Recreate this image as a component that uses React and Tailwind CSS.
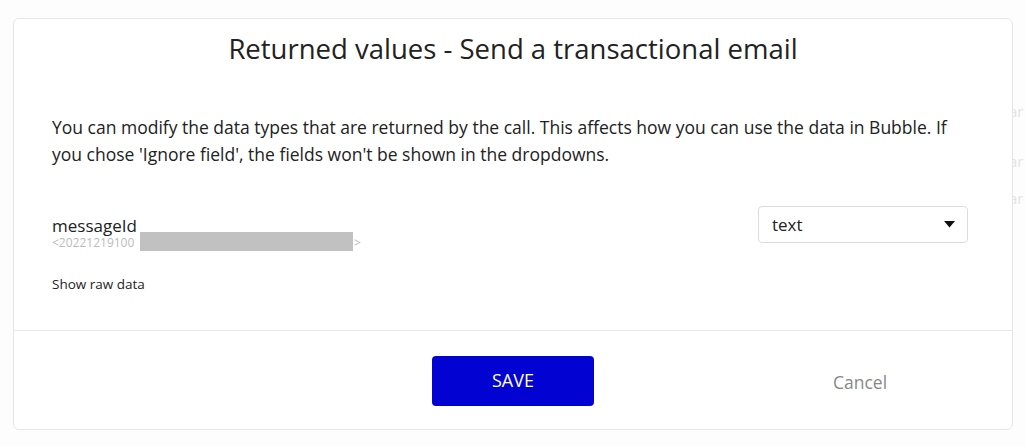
export default function App() {
  return (
    <div className="w-[1025px] h-[447px] bg-[#fdfdfd] overflow-hidden relative" style={{ fontFamily: '"Open Sans", sans-serif' }}>
      <div className="absolute left-[1009px] top-[101px] w-[16px] flex flex-col text-[15px] leading-[20px] text-[#e4e4e4]">
        <span>ar</span>
        <span className="mt-[30px]">ar</span>
        <span className="mt-[17px]">ar</span>
      </div>
      <div className="absolute left-[13px] top-[18px] w-[1000px] h-[412px] bg-white border border-[#e6e6e6] rounded-[6px] flex flex-col">
        <div className="pt-[11px] text-center text-[27.5px] leading-[38px] text-[#222]">
          Returned values - Send a transactional email
        </div>
        <div className="pl-[38px] pr-[46px] pt-[46px] text-[17.5px] leading-[27px] text-[#222]">
          You can modify the data types that are returned by the call. This affects how you can use the data in Bubble. If you chose 'Ignore field', the fields won't be shown in the dropdowns.
        </div>
        <div className="flex justify-between items-start pl-[38px] pr-[44px] mt-[38px]">
          <div className="pt-[9px]">
            <div className="text-[17px] leading-[21px] text-[#222]">messageId</div>
            <div className="flex items-start text-[12px] leading-[14px] text-[#bbb]">
              <span className="w-[88px] whitespace-nowrap">&lt;20221219100</span>
              <div className="mt-[-4px] w-[213px] h-[19px] bg-[#c1c1c1]"></div>
              <span className="ml-[1px]">&gt;</span>
            </div>
          </div>
          <div className="w-[210px] h-[37px] border border-[#dcdcdc] rounded-[4px] flex items-center justify-between pl-[13px] pr-[12px]">
            <span className="text-[17px] text-[#222]">text</span>
            <svg width="11" height="7" viewBox="0 0 11 7"><path d="M0 0 L11 0 L5.5 6.5 Z" fill="#111" /></svg>
          </div>
        </div>
        <div className="pl-[38px] mt-[24px] text-[13.5px] leading-[18px] text-[#222]">Show raw data</div>
        <div className="mt-[37px] border-t border-[#e8e8e8] flex items-start pt-[25px]">
          <div className="w-[418px]"></div>
          <button className="w-[162px] h-[50px] rounded-[4px] bg-[#0202d2] text-white text-[18px] flex items-center justify-center pb-[2px]">SAVE</button>
          <div className="pl-[239px] pt-[14px] text-[17.5px] leading-[24px] text-[#888]">Cancel</div>
        </div>
      </div>
    </div>
  );
}
